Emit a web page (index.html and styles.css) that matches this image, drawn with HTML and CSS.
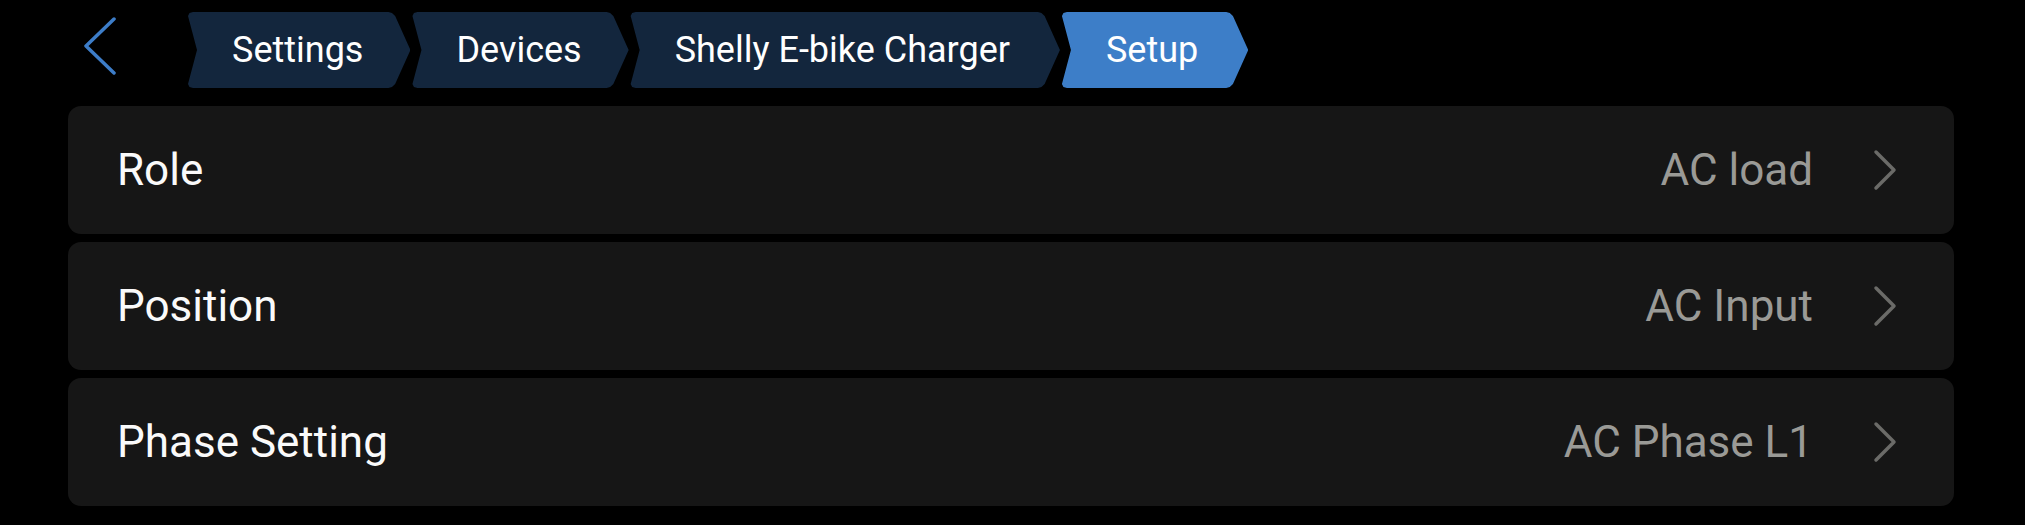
FILE: index.html
```html
<!DOCTYPE html>
<html lang="en">
<head>
<meta charset="utf-8">
<title>Setup</title>
<link rel="stylesheet" href="styles.css">
</head>
<body>
  <header class="topbar">
    <button class="back" aria-label="Back">
      <svg class="back-icon" width="34" height="58" viewBox="0 0 34 58">
        <polyline points="31,2 3,29 31,56" fill="none" stroke="#3d7dc8" stroke-width="3.5" stroke-linecap="round" stroke-linejoin="round"/>
      </svg>
    </button>
    <nav class="crumbs">
      <span class="crumb">Settings</span>
      <span class="crumb">Devices</span>
      <span class="crumb crumb-wide">Shelly E-bike Charger</span>
      <span class="crumb crumb-active">Setup</span>
    </nav>
  </header>

  <main class="list">
    <div class="row">
      <span class="row-label">Role</span>
      <span class="row-value">AC load</span>
      <svg class="row-chevron" width="24" height="42" viewBox="0 0 24 42">
        <polyline points="3,3 21,21 3,39" fill="none" stroke="#6b6b68" stroke-width="3.5" stroke-linecap="round" stroke-linejoin="round"/>
      </svg>
    </div>
    <div class="row">
      <span class="row-label">Position</span>
      <span class="row-value">AC Input</span>
      <svg class="row-chevron" width="24" height="42" viewBox="0 0 24 42">
        <polyline points="3,3 21,21 3,39" fill="none" stroke="#6b6b68" stroke-width="3.5" stroke-linecap="round" stroke-linejoin="round"/>
      </svg>
    </div>
    <div class="row">
      <span class="row-label">Phase Setting</span>
      <span class="row-value">AC Phase L1</span>
      <svg class="row-chevron" width="24" height="42" viewBox="0 0 24 42">
        <polyline points="3,3 21,21 3,39" fill="none" stroke="#6b6b68" stroke-width="3.5" stroke-linecap="round" stroke-linejoin="round"/>
      </svg>
    </div>
  </main>
</body>
</html>
```

FILE: styles.css
```css
* {
  box-sizing: border-box;
}

html, body {
  margin: 0;
  background: #000;
}

body {
  font-family: Roboto, "Liberation Sans", sans-serif;
  color: #fafafa;
}

/* top bar: back arrow + breadcrumb trail */
.topbar {
  display: flex;
  align-items: center;
  height: 88px;
  padding: 12px 0 0 68px;
}

.back {
  display: flex;
  align-items: flex-start;
  align-self: stretch;
  width: 119px;
  padding: 5px 0 0 15px;
  margin: 0;
  border: 0;
  background: none;
}

.back-icon {
  display: block;
}

.crumbs {
  display: flex;
  gap: 1px;
  height: 76px;
}

.crumb {
  display: flex;
  align-items: center;
  height: 76px;
  padding: 0 47px 0 45px;
  font-size: 36px;
  color: #fff;
  background: #13263d;
  clip-path: polygon(
    1px 4px, 2.5px 1px, 6px 0,
    calc(100% - 22px) 0, calc(100% - 18.5px) 1px, calc(100% - 15.3px) 4px,
    100% 50%,
    calc(100% - 15.3px) calc(100% - 4px), calc(100% - 18.5px) calc(100% - 1px), calc(100% - 22px) 100%,
    6px 100%, 2.5px calc(100% - 1px), 1px calc(100% - 4px),
    10px 50%
  );
}

.crumb-wide {
  padding-right: 50px;
}

.crumb-active {
  background: #3d7ec8;
  padding-right: 50px;
}

/* settings rows */
.list {
  display: flex;
  flex-direction: column;
  gap: 8px;
  padding: 18px 71px 0 68px;
}

.row {
  display: flex;
  align-items: center;
  height: 128px;
  padding: 0 57px 0 49px;
  background: #161616;
  border-radius: 13px;
  font-size: 44px;
}

.row-label {
  flex: 1;
  color: #fafafa;
}

.row-value {
  color: #9a9a96;
  margin-right: 60px;
}

.row-chevron {
  display: block;
}
```
